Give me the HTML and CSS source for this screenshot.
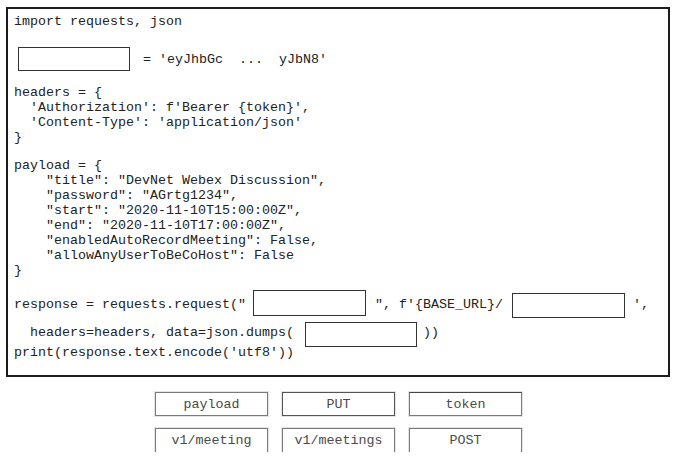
FILE: index.html
```html
<!DOCTYPE html>
<html>
<head>
<meta charset="utf-8">
<link rel="stylesheet" href="styles.css">
</head>
<body>
<div class="code">
  <div class="line">import requests, json</div>
  <div class="row row-token">
    <span class="slot slot-token"></span>
    <span class="txt">= 'eyJhbGc  ...  yJbN8'</span>
  </div>
  <div class="group g-headers">
    <div class="line">headers = {</div>
    <div class="line">  'Authorization': f'Bearer {token}',</div>
    <div class="line">  'Content-Type': 'application/json'</div>
    <div class="line">}</div>
  </div>
  <div class="group g-payload">
    <div class="line">payload = {</div>
    <div class="line">    "title": "DevNet Webex Discussion",</div>
    <div class="line">    "password": "AGrtg1234",</div>
    <div class="line">    "start": "2020-11-10T15:00:00Z",</div>
    <div class="line">    "end": "2020-11-10T17:00:00Z",</div>
    <div class="line">    "enabledAutoRecordMeeting": False,</div>
    <div class="line">    "allowAnyUserToBeCoHost": False</div>
    <div class="line">}</div>
  </div>
  <div class="row row-resp">
    <span class="txt">response = requests.request("</span>
    <span class="slot slot-method"></span>
    <span class="txt t-url">", f'{BASE_URL}/</span>
    <span class="slot slot-url"></span>
    <span class="txt t-end">',</span>
  </div>
  <div class="row row-hdr">
    <span class="txt t-hdr">  headers=headers, data=json.dumps(</span>
    <span class="slot slot-data"></span>
    <span class="txt t-close">))</span>
  </div>
  <div class="line l-print">print(response.text.encode('utf8'))</div>
</div>
<div class="choices">
  <div class="chip">payload</div>
  <div class="chip chip-dark">PUT</div>
  <div class="chip chip-top">token</div>
  <div class="chip">v1/meeting</div>
  <div class="chip">v1/meetings</div>
  <div class="chip">POST</div>
</div>
</body>
</html>
```
FILE: styles.css
```css
html, body {
  margin: 0;
  padding: 0;
  background: #ffffff;
}
body {
  font-family: "Liberation Mono", "DejaVu Sans Mono", monospace;
  font-size: 13.33px;
  color: #222;
}
.code {
  box-sizing: border-box;
  margin: 7px 0 0 6px;
  width: 664px;
  height: 370px;
  border: 2px solid #1c1c1c;
  padding: 5px 0 0 6px;
}
.line {
  white-space: pre;
  line-height: 15px;
  height: 15px;
}
.txt {
  white-space: pre;
  line-height: 15px;
}
.row {
  display: flex;
  align-items: center;
}
.slot {
  box-sizing: border-box;
  display: block;
  border: 1px solid #333;
  background: #fff;
  flex: none;
}
.row-token {
  margin-top: 18px;
  height: 24px;
}
.slot-token {
  margin-left: 4px;
  width: 112px;
  height: 24px;
  margin-right: 13px;
}
.g-headers {
  margin-top: 14px;
}
.g-payload {
  margin-top: 13px;
}
.row-resp {
  margin-top: 12px;
  height: 28px;
}
.slot-method {
  align-self: flex-start;
  width: 113px;
  height: 26px;
  margin-left: 7px;
  margin-right: 9px;
}
.slot-url {
  align-self: flex-end;
  width: 113px;
  height: 25px;
  margin-left: 9px;
  margin-right: 8px;
}
.row-hdr {
  margin-top: 4px;
  height: 25px;
}
.t-hdr {
  align-self: flex-start;
  padding-top: 3px;
}
.t-close {
  align-self: flex-start;
  padding-top: 3px;
}
.slot-data {
  width: 112px;
  height: 25px;
  margin-left: 11px;
  margin-right: 6px;
}
.l-print {
  margin-top: -2px;
}
.choices {
  display: grid;
  grid-template-columns: repeat(3, 113px);
  grid-auto-rows: 24px;
  column-gap: 14px;
  row-gap: 12px;
  margin: 15px 0 0 155px;
}
.chip {
  box-sizing: border-box;
  border: 1px solid #7a7a7a;
  box-shadow: 0 0 0 1px #e4e4e4;
  display: flex;
  align-items: center;
  justify-content: center;
  color: #4a4a4a;
  white-space: pre;
}
.chip-dark {
  border-color: #555;
}
.chip-top {
  border-top-color: #444;
}
.choices .chip:nth-child(n+4) {
  height: 25px;
}
```
